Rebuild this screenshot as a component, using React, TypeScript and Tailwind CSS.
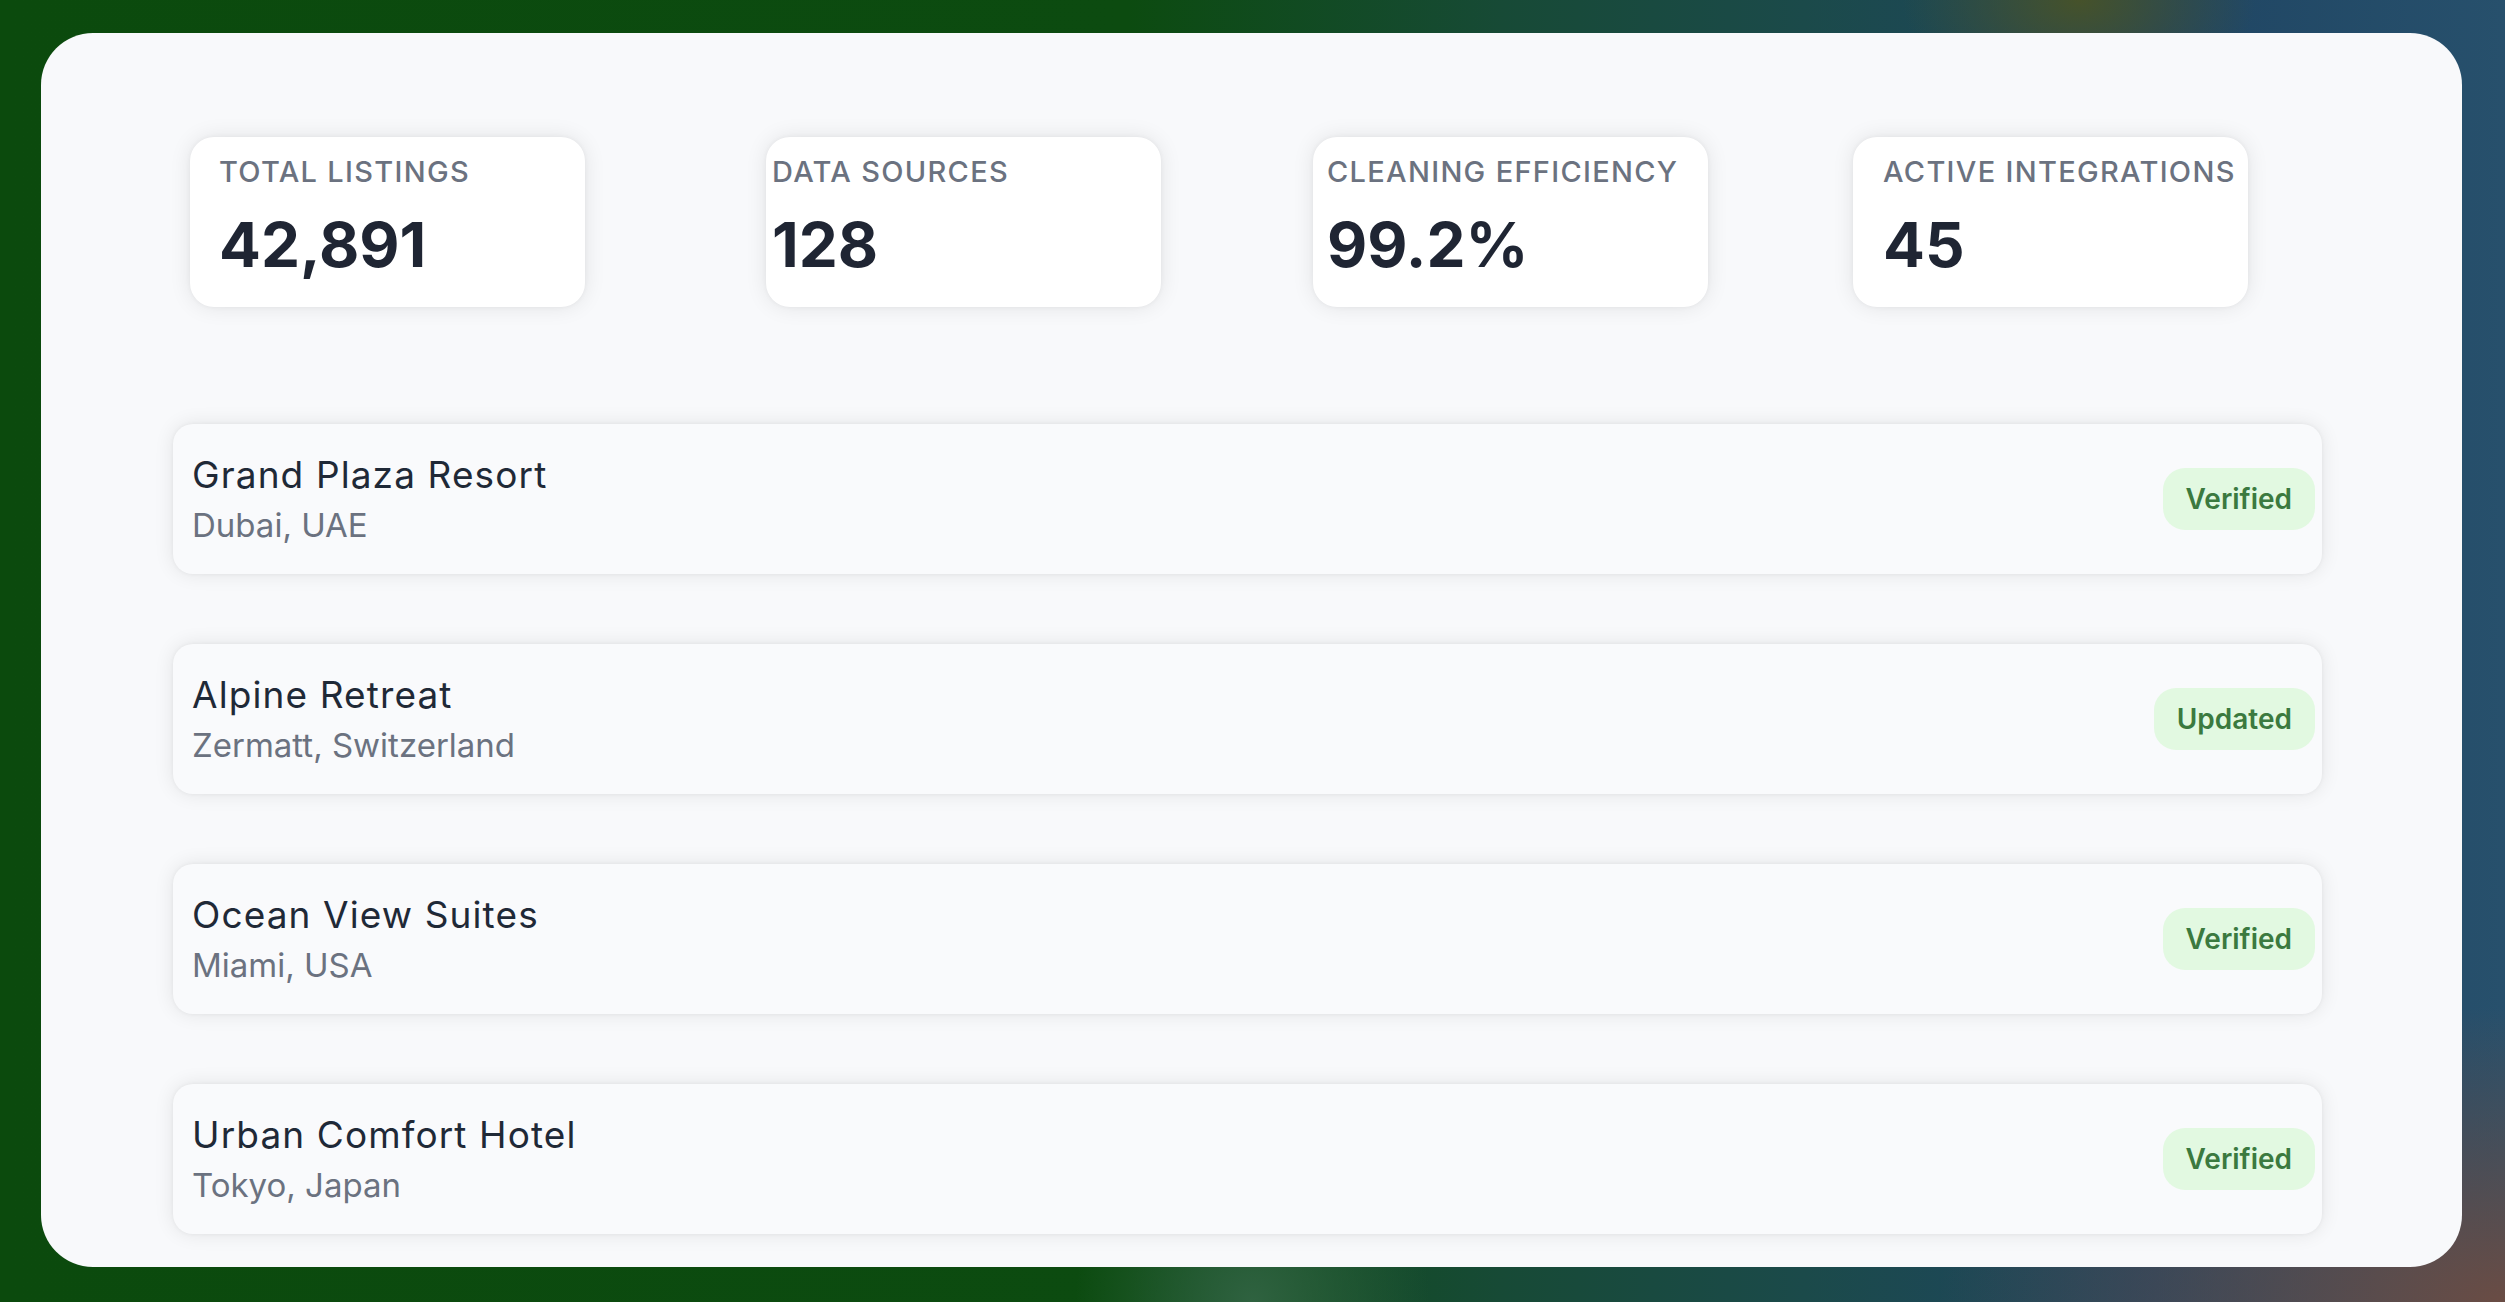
import React from 'react';

interface Stat {
  label: string;
  value: string;
  offset: string;
}

interface Listing {
  name: string;
  location: string;
  status: string;
}

const stats: Stat[] = [
  { label: 'TOTAL LISTINGS', value: '42,891', offset: 'pl-[29px]' },
  { label: 'DATA SOURCES', value: '128', offset: 'ml-[181px] pl-[6px]' },
  { label: 'CLEANING EFFICIENCY', value: '99.2%', offset: 'ml-[152px] pl-[14px]' },
  { label: 'ACTIVE INTEGRATIONS', value: '45', offset: 'ml-[145px] pl-[30px]' },
];

const listings: Listing[] = [
  { name: 'Grand Plaza Resort', location: 'Dubai, UAE', status: 'Verified' },
  { name: 'Alpine Retreat', location: 'Zermatt, Switzerland', status: 'Updated' },
  { name: 'Ocean View Suites', location: 'Miami, USA', status: 'Verified' },
  { name: 'Urban Comfort Hotel', location: 'Tokyo, Japan', status: 'Verified' },
];

const StatCard: React.FC<{ stat: Stat }> = ({ stat }) => (
  <div
    className={`w-[395px] h-[170px] shrink-0 rounded-3xl bg-white pt-[15px] shadow-[0_0_22px_rgba(0,0,0,0.09),0_0_5px_rgba(0,0,0,0.05)] ${stat.offset}`}
  >
    <div className="whitespace-nowrap text-[29px] leading-[40px] font-medium tracking-[0.045em] text-[#6b7280]">
      {stat.label}
    </div>
    <div className="mt-[22px] text-[62px] leading-none font-bold text-[#1f2533]">
      {stat.value}
    </div>
  </div>
);

const ListingRow: React.FC<{ listing: Listing }> = ({ listing }) => (
  <div className="flex h-[150px] items-center justify-between rounded-[20px] bg-[#f9fafc] pl-[19px] pr-[7px] shadow-[0_0_20px_rgba(0,0,0,0.09),0_0_4px_rgba(0,0,0,0.05)]">
    <div>
      <div className="text-[37px] leading-[52px] tracking-[0.03em] text-[#1f2937]">{listing.name}</div>
      <div className="text-[33px] leading-[48px] text-[#6b7280]">{listing.location}</div>
    </div>
    <span className="flex h-[62px] items-center rounded-[22px] bg-[#e2f9e1] px-[23px] text-[28px] font-semibold text-[#3b7a3f]">
      {listing.status}
    </span>
  </div>
);

export default function App() {
  return (
    <div
      className="h-[1302px] w-[2505px] overflow-hidden pl-[41px] pt-[33px] font-['Inter',sans-serif] bg-[radial-gradient(ellipse_at_100%_100%,#6a4c44_0%,transparent_16%),radial-gradient(ellipse_at_83%_0%,#46522a_0%,transparent_6%),radial-gradient(ellipse_at_50%_100%,#2f6240_0%,transparent_10%),linear-gradient(90deg,#0b4a0d_0%,#0c4b10_45%,#174a36_60%,#1b4a4a_72%,#1f4563_86%,#27506c_100%)]"
    >
      <div className="flex h-[1234px] w-[2421px] flex-col rounded-[52px] bg-[#f8f9fb] pt-[104px]">
        {/* stat cards */}
        <div className="flex pl-[149px]">
          {stats.map(stat => (
            <StatCard key={stat.label} stat={stat} />
          ))}
        </div>

        {/* listing rows */}
        <div className="ml-[132px] mt-[117px] flex w-[2149px] flex-col gap-[70px]">
          {listings.map(listing => (
            <ListingRow key={listing.name} listing={listing} />
          ))}
        </div>
      </div>
    </div>
  );
}
